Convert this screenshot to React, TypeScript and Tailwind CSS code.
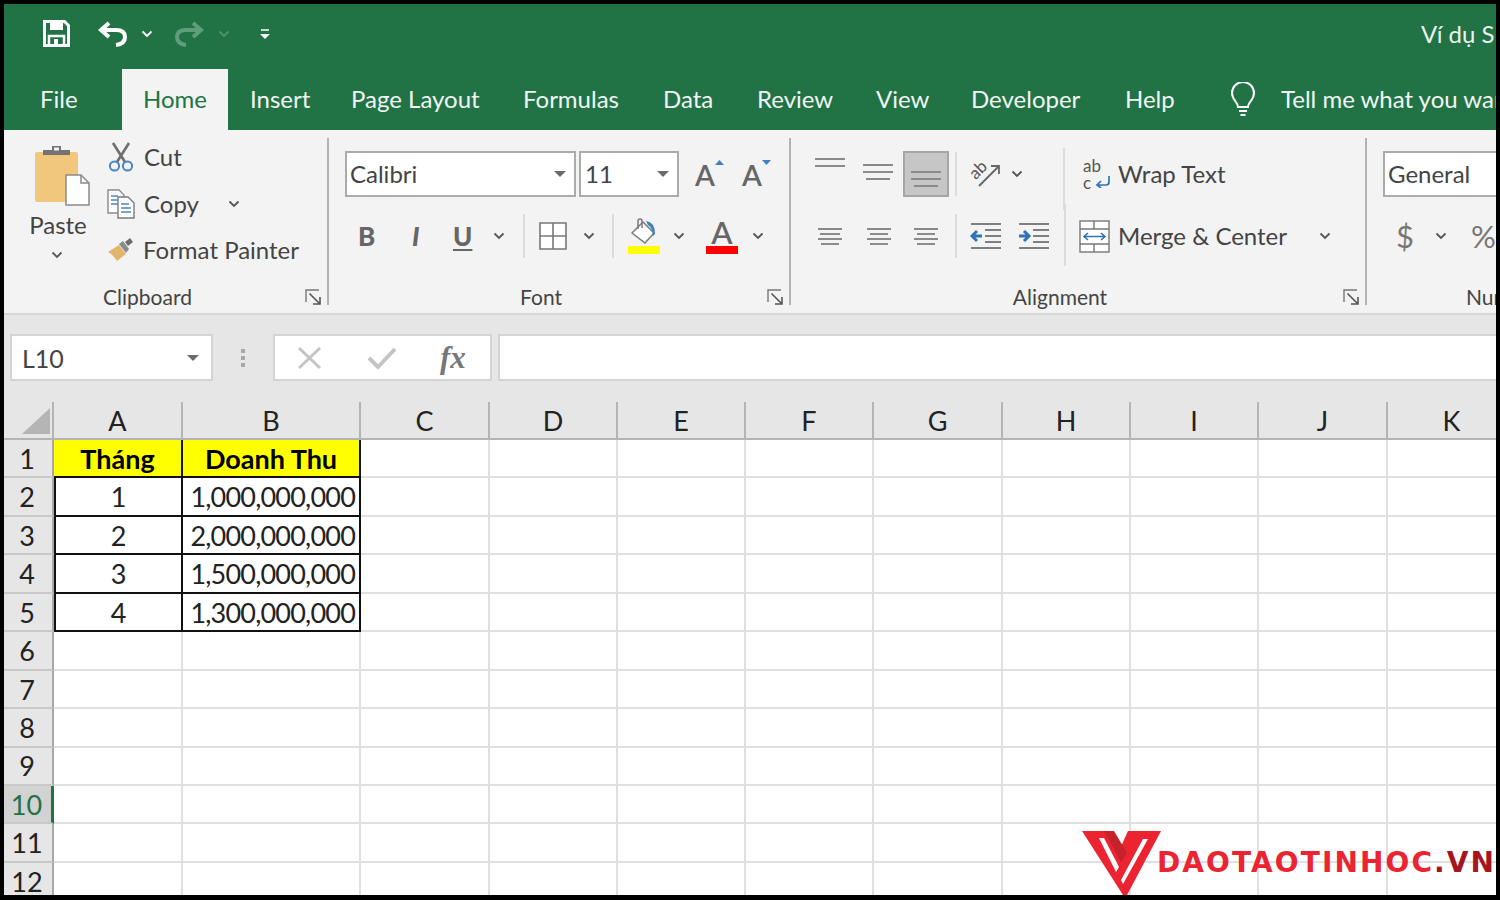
import type { ReactNode } from 'react';

const font = "font-['Lato','Open_Sans',sans-serif]";

const tabs = [
  { label: 'Insert', w: 58 },
  { label: 'Page Layout', w: 129 },
  { label: 'Formulas', w: 97 },
  { label: 'Data', w: 51 },
  { label: 'Review', w: 76 },
  { label: 'View', w: 52 },
  { label: 'Developer', w: 111 },
  { label: 'Help', w: 51 },
];

const columns = ['A', 'B', 'C', 'D', 'E', 'F', 'G', 'H', 'I', 'J', 'K'];

const table: Record<number, string[]> = {
  2: ['1', '1,000,000,000'],
  3: ['2', '2,000,000,000'],
  4: ['3', '1,500,000,000'],
  5: ['4', '1,300,000,000'],
};

function Chevron({ color = '#555', className = '' }: { color?: string; className?: string }) {
  return (
    <svg width="12" height="8" viewBox="0 0 12 8" className={`shrink-0 ${className}`}>
      <path d="M1.5 1.5 6 6l4.5-4.5" fill="none" stroke={color} strokeWidth="1.8" />
    </svg>
  );
}

function Caret() {
  return (
    <svg width="12" height="6" viewBox="0 0 12 6">
      <path d="M0 0h12L6 6z" fill="#6a6a6a" />
    </svg>
  );
}

function Launcher() {
  return (
    <svg width="17" height="17" viewBox="0 0 17 17" className="absolute right-[7px] bottom-[7px]">
      <path d="M1 13V1h13" fill="none" stroke="#777" strokeWidth="1.4" />
      <path d="M4.5 4.5 14 14M8 15h7V8" fill="none" stroke="#555" strokeWidth="1.6" />
    </svg>
  );
}

function Sep({ className = '' }: { className?: string }) {
  return <div className={`w-[2px] h-[44px] bg-[#dcdcdc] shrink-0 ${className}`} />;
}

function Lines({ widths, gap = 7 }: { widths: number[]; gap?: number }) {
  return (
    <div className="flex flex-col items-center" style={{ gap }}>
      {widths.map((w, i) => (
        <div key={i} className="h-[2px] bg-[#8a8a8a]" style={{ width: w }} />
      ))}
    </div>
  );
}

function Group({ w, label, children }: { w: number; label: string; children: ReactNode }) {
  return (
    <div className="relative flex flex-col shrink-0 h-full" style={{ width: w }}>
      <div className="flex-1 min-h-0">{children}</div>
      <div className="h-[29px] pr-[38px] text-center text-[21px] leading-[26px] text-[#444] whitespace-nowrap">{label}</div>
      <Launcher />
      <div className="absolute right-0 top-[8px] bottom-[8px] w-[2px] bg-[#b3b3b3]" />
    </div>
  );
}

function PasteIcon() {
  return (
    <svg width="56" height="62" viewBox="0 0 56 62">
      <rect x="1" y="8" width="43" height="50" rx="2" fill="#f0c77c" />
      <path d="M9 11V6h9V2h9v4h9v5z" fill="#737373" />
      <rect x="20" y="3.5" width="5" height="3" fill="#f3f3f3" />
      <path d="M32 31h15l8 8v22H32z" fill="#fff" stroke="#8a8a8a" strokeWidth="1.5" />
      <path d="M47 31v8h8" fill="none" stroke="#8a8a8a" strokeWidth="1.5" />
    </svg>
  );
}

function ScissorsIcon() {
  return (
    <svg width="28" height="30" viewBox="0 0 28 30">
      <path d="M6 1 18 20M22 1 10 20" fill="none" stroke="#6f6f6f" strokeWidth="2.6" />
      <circle cx="7.5" cy="24" r="4.6" fill="none" stroke="#4a86c5" strokeWidth="2" />
      <circle cx="20.5" cy="24" r="4.6" fill="none" stroke="#4a86c5" strokeWidth="2" />
    </svg>
  );
}

function CopyIcon() {
  return (
    <svg width="28" height="30" viewBox="0 0 28 30">
      <path d="M1 1h11l5 5v18H1z" fill="#fff" stroke="#8a8a8a" strokeWidth="1.4" />
      <path d="M4 7h7M4 11h9M4 15h9" stroke="#4a86c5" strokeWidth="1.4" />
      <path d="M11 8h10l6 6v15H11z" fill="#fff" stroke="#7a7a7a" strokeWidth="1.4" />
      <path d="M14 15h8M14 19h10M14 23h10" stroke="#4a86c5" strokeWidth="1.4" />
    </svg>
  );
}

function BrushIcon() {
  return (
    <svg width="28" height="26" viewBox="0 0 28 26">
      <path d="M1 15 12 8l7 9-9 7C8 21 5 17 1 15z" fill="#e3b56c" />
      <path d="m12 7 4-3 6 8-3 4z" fill="#8a8a8a" />
      <path d="m18 5 5-4 3 4-5 4z" fill="#6d6d6d" />
    </svg>
  );
}

function FillIcon() {
  return (
    <div className="flex flex-col items-center w-[32px]">
      <svg width="30" height="28" viewBox="0 0 30 28">
        <path d="m3 15 11-11 11 11-9 10z" fill="#fff" stroke="#7a7a7a" strokeWidth="1.5" />
        <path d="M9 11V3q0-2 2-2t2 2v7" fill="none" stroke="#7a7a7a" strokeWidth="1.5" />
        <path d="M17 3q9 1 9 13l-2 2q0-8-5-11z" fill="#3f80bf" />
      </svg>
      <div className="w-[32px] h-[8px] bg-[#ffff00]" />
    </div>
  );
}

function RotateIcon() {
  return (
    <svg width="32" height="32" viewBox="0 0 32 32">
      <text x="1" y="16" fontSize="17" fill="#555" transform="rotate(-45 12 14)" fontFamily="Lato, sans-serif">ab</text>
      <path d="M9 29 28 10M21 9h8v8" fill="none" stroke="#666" strokeWidth="1.8" />
    </svg>
  );
}

function IndentIcon({ flip = false }: { flip?: boolean }) {
  return (
    <svg width="32" height="28" viewBox="0 0 32 28">
      <path d="M1 2h30M15 8h16M15 14h16M15 20h16M1 26h30" stroke="#7f7f7f" strokeWidth="2" />
      {flip ? (
        <path d="M1 14h9M6 9l5 5-5 5" fill="none" stroke="#2f75b5" strokeWidth="3" />
      ) : (
        <path d="M12 14H3M7 9l-5 5 5 5" fill="none" stroke="#2f75b5" strokeWidth="3" />
      )}
    </svg>
  );
}

function WrapIcon() {
  return (
    <div className="relative w-[28px] h-[34px] shrink-0 text-[#555] text-[17px] leading-[17px] font-['Lato',sans-serif]">
      <div>ab</div>
      <div>c</div>
      <svg width="16" height="12" viewBox="0 0 16 12" className="absolute right-0 bottom-[3px]">
        <path d="M14 0v6q0 3-3 3H2M6 5 2 9l4 3" fill="none" stroke="#2f75b5" strokeWidth="1.7" />
      </svg>
    </div>
  );
}

function MergeIcon() {
  return (
    <svg width="31" height="33" viewBox="0 0 31 33">
      <rect x="1" y="1" width="29" height="31" fill="#fff" stroke="#777" strokeWidth="1.4" />
      <path d="M1 9h29M1 24h29M15 1v8M15 24v8" stroke="#777" strokeWidth="1.4" />
      <path d="M5 16.500h21M9 13l-4 3.500 4 3.500M22 13l4 3.500-4 3.500" fill="none" stroke="#2f75b5" strokeWidth="1.6" />
    </svg>
  );
}

function Logo() {
  return (
    <div className="absolute left-[1078px] top-[826px] flex items-start">
      <svg width="80" height="66" viewBox="0 0 80 66" className="shrink-0">
        <path d="M0 1h27l10 20L46 1h33L45 65h-4z" fill="#ec2330" />
        <path d="M22 1h10l13 22-6 9z" fill="#c6222c" />
        <path d="M17 8h5l15 29-3 5z" fill="#fff" />
        <path d="M61 9h5L41 54l-2-4z" fill="#fff" />
      </svg>
      <div className="ml-[-5px] mt-[16px] w-[338px] overflow-hidden text-[28px] leading-[34px] font-bold tracking-[2.1px] whitespace-nowrap text-[#ec2330] font-['DejaVu_Sans',sans-serif]">
        DAOTAOTINHOC<span className="text-[#a5161f]">.VN</span>
      </div>
    </div>
  );
}

export default function App() {
  return (
    <div className={`w-[1500px] h-[900px] bg-black pt-[4px] pl-[4px] pr-[4px] pb-[5px] ${font}`}>
      <div className="relative w-full h-full overflow-hidden bg-white flex flex-col">
        {/* Title bar */}
        <div className="h-[65px] bg-[#217346] flex items-center shrink-0 pl-[39px] pb-[6px] text-white">
          <svg width="27" height="27" viewBox="0 0 27 27" className="shrink-0">
            <path d="M1.500 1.500h20l4 4v20h-24z" fill="none" stroke="#fff" strokeWidth="3" />
            <rect x="7" y="3" width="13" height="7" fill="#fff" />
            <path d="M6 25v-9h15v9" fill="none" stroke="#fff" strokeWidth="2.500" />
            <rect x="11" y="19" width="4" height="6" fill="#fff" />
          </svg>
          <svg width="30" height="26" viewBox="0 0 30 26" className="ml-[28px] shrink-0">
            <path d="M11 2 3 9l8 7M3 9h15q9 0 9 7t-9 8" fill="none" stroke="#fff" strokeWidth="4" />
          </svg>
          <Chevron color="#fff" className="ml-[13px]" />
          <svg width="30" height="26" viewBox="0 0 30 26" className="ml-[21px] shrink-0">
            <path d="M19 2l8 7-8 7M27 9H12q-9 0-9 7t9 8" fill="none" stroke="#5f9d7c" strokeWidth="4" />
          </svg>
          <Chevron color="#4f9070" className="ml-[14px]" />
          <svg width="10" height="11" viewBox="0 0 10 11" className="ml-[30px] mt-[2px] shrink-0">
            <path d="M1 1h8" stroke="#fff" strokeWidth="1.500" />
            <path d="M0 5h10L5 10z" fill="#fff" />
          </svg>
          <div className="ml-auto text-[24px] text-[#e9f2ec] whitespace-nowrap w-[75px] overflow-hidden">Ví dụ SUM</div>
        </div>

        {/* Tabs */}
        <div className="h-[61px] bg-[#217346] flex shrink-0 overflow-hidden text-[24px] leading-[60px] text-[#f1f6f3] whitespace-nowrap pl-[36px]">
          <div className="w-[37px] shrink-0">File</div>
          <div className="ml-[45px] w-[106px] shrink-0 bg-[#f3f3f3] text-center text-[#217346]">Home</div>
          <div className="flex gap-[43px] ml-[22px] shrink-0">
            {tabs.map((t) => (
              <div key={t.label} className="shrink-0" style={{ width: t.w }}>{t.label}</div>
            ))}
          </div>
          <div className="ml-[54px] flex items-center shrink-0">
            <svg width="26" height="36" viewBox="0 0 26 36" className="mt-[1px] shrink-0">
              <path d="M8 25c0-5-6-7-6-14a11 11 0 0 1 22 0c0 7-6 9-6 14z" fill="none" stroke="#fff" strokeWidth="2" />
              <path d="M9 29h8M10.500 33h5" stroke="#fff" strokeWidth="2" />
            </svg>
            <div className="ml-[25px] mt-[-2px] w-[216px] overflow-hidden">Tell me what you want to do</div>
          </div>
        </div>

        {/* Ribbon */}
        <div className="h-[185px] bg-[#f3f3f3] border-b-2 border-[#d6d6d6] flex shrink-0 text-[24px] text-[#444]">
          <Group w={325} label="Clipboard">
            <div className="flex">
              <div className="w-[103px] flex flex-col items-center pt-[14px] pl-[4px]">
                <div className="pl-[8px]"><PasteIcon /></div>
                <div className="mt-[4px] leading-[30px] pl-[1px]">Paste</div>
                <Chevron className="mt-[11px] mr-[2px]" />
              </div>
              <div className="flex flex-col pt-[12px] whitespace-nowrap leading-[30px] gap-[16.500px]">
                <div className="flex items-center gap-[9px]"><ScissorsIcon /><span>Cut</span></div>
                <div className="flex items-center gap-[9px]"><CopyIcon /><span>Copy</span><Chevron className="ml-[20px]" /></div>
                <div className="flex items-center gap-[8px]"><BrushIcon /><span>Format Painter</span></div>
              </div>
            </div>
          </Group>

          <Group w={462} label="Font">
            <div className="pl-[16px] pt-[21px]">
              <div className="flex items-center h-[46px]">
                <div className="w-[231px] h-[46px] bg-white border-2 border-[#ababab] flex items-center justify-between pl-[3px] pr-[8px]">
                  <span>Calibri</span><Caret />
                </div>
                <div className="w-[100px] h-[46px] ml-[3px] bg-white border-2 border-[#ababab] flex items-center justify-between pl-[4px] pr-[8px]">
                  <span>11</span><Caret />
                </div>
                <div className="relative w-[26px] ml-[16px] text-[29px] leading-[46px] font-semibold text-[#666] pt-[2px]">
                  A
                  <svg width="9" height="5" viewBox="0 0 9 5" className="absolute right-[-3px] top-[10px]"><path d="M0 5h9L4.500 0z" fill="#3f80bf" /></svg>
                </div>
                <div className="relative w-[26px] ml-[21px] text-[29px] leading-[46px] font-semibold text-[#666] pt-[2px]">
                  A
                  <svg width="9" height="5" viewBox="0 0 9 5" className="absolute right-[-3px] top-[10px]"><path d="M0 0h9L4.500 5z" fill="#3f80bf" /></svg>
                </div>
              </div>
              <div className="flex items-center h-[46px] mt-[16px]">
                <span className="w-[16px] ml-[13px] text-[26px] font-black text-[#666]">B</span>
                <span className="w-[14px] ml-[38px] text-[26px] font-black italic text-[#666]">I</span>
                <span className="w-[18px] ml-[27px] text-[26px] leading-[30px] font-black text-[#666] underline underline-offset-[3px]">U</span>
                <Chevron className="ml-[22px]" />
                <Sep className="ml-[18px]" />
                <svg width="28" height="28" viewBox="0 0 28 28" className="ml-[14px] shrink-0">
                  <path d="M1 1h26v26H1zM14 1v26M1 14h26" fill="#fff" stroke="#777" strokeWidth="1.600" />
                </svg>
                <Chevron className="ml-[16px]" />
                <Sep className="ml-[17px]" />
                <div className="ml-[14px]"><FillIcon /></div>
                <Chevron className="ml-[13px]" />
                <div className="ml-[21px] w-[32px] flex flex-col items-center">
                  <span className="text-[31px] leading-[28px] font-semibold text-[#666]">A</span>
                  <div className="w-[32px] h-[8px] bg-[#ff0000]" />
                </div>
                <Chevron className="ml-[14px]" />
              </div>
            </div>
          </Group>

          <Group w={576} label="Alignment">
            <div className="pl-[23px] pt-[21px]">
              <div className="flex items-start h-[46px]">
                <div className="w-[32px] pt-[7px]"><Lines widths={[30, 30]} gap={5} /></div>
                <div className="w-[32px] ml-[16px] pt-[13px]"><Lines widths={[30, 30, 24]} gap={5} /></div>
                <div className="w-[46px] h-[46px] ml-[9px] bg-[#c6c6c6] border-2 border-[#a6a6a6] pt-[18px]"><Lines widths={[30, 30, 24]} gap={5} /></div>
                <Sep className="ml-[6px] h-[40px] mt-[1px]" />
                <div className="ml-[13px] pt-[6px]"><RotateIcon /></div>
                <Chevron className="ml-[9px] mt-[19px]" />
                <Sep className="ml-[40px] mt-[-3px] h-[62px]" />
                <div className="ml-[18px] pt-[6px]"><WrapIcon /></div>
                <div className="ml-[7px] leading-[46px] whitespace-nowrap">Wrap Text</div>
              </div>
              <div className="flex items-center h-[46px] mt-[16px] ml-[4px]">
                <div className="w-[24px]"><Lines widths={[24, 20, 24, 18]} gap={3} /></div>
                <div className="w-[26px] ml-[24px]"><Lines widths={[24, 18, 24, 18]} gap={3} /></div>
                <div className="w-[24px] ml-[22px] flex justify-end"><Lines widths={[24, 18, 24, 18]} gap={3} /></div>
                <Sep className="ml-[17px]" />
                <div className="ml-[13px]"><IndentIcon /></div>
                <div className="ml-[16px]"><IndentIcon flip /></div>
                <Sep className="ml-[14px] mt-[-2px] h-[62px]" />
                <div className="ml-[13px]"><MergeIcon /></div>
                <div className="ml-[8px] whitespace-nowrap">Merge &amp; Center</div>
                <Chevron className="ml-[32px]" />
              </div>
            </div>
          </Group>

          <div className="relative flex-1 min-w-0 overflow-hidden pl-[16px] pt-[21px] whitespace-nowrap">
            <div className="w-[200px] h-[46px] bg-white border-2 border-[#ababab] pl-[3px] leading-[42px]">General</div>
            <div className="flex items-center h-[46px] mt-[16px] text-[#777]">
              <span className="ml-[13px] text-[31px]">$</span>
              <Chevron className="ml-[21px]" />
              <span className="ml-[24px] text-[31px]">%</span>
            </div>
            <div className="absolute left-[99px] bottom-[3px] text-[21px] leading-[26px]">Number</div>
          </div>
        </div>

        {/* Formula bar */}
        <div className="h-[87px] bg-[#e6e6e6] shrink-0 flex items-start pt-[19px] pl-[6px]">
          <div className="w-[203px] h-[47px] bg-white border-2 border-[#d4d4d4] flex items-center justify-between pl-[10px] pr-[12px] text-[25px] text-[#444]">
            <span className="pt-[2px]">L10</span><Caret />
          </div>
          <div className="w-[60px] h-[47px] flex flex-col items-center justify-center gap-[3px]">
            <div className="w-[4px] h-[4px] bg-[#a8a8a8]" />
            <div className="w-[4px] h-[4px] bg-[#a8a8a8]" />
            <div className="w-[4px] h-[4px] bg-[#a8a8a8]" />
          </div>
          <div className="w-[219px] h-[47px] bg-white border-2 border-[#d4d4d4] flex items-center pl-[22px]">
            <svg width="26" height="24" viewBox="0 0 26 24" className="shrink-0">
              <path d="M2 2l21 20M23 2 2 22" stroke="#c4c4c4" strokeWidth="3" />
            </svg>
            <svg width="30" height="24" viewBox="0 0 30 24" className="ml-[44px] shrink-0">
              <path d="M2 12l9 9L28 3" fill="none" stroke="#c4c4c4" strokeWidth="4" />
            </svg>
            <span className="ml-[43px] text-[31px] leading-[30px] font-bold italic text-[#777] font-['Liberation_Serif',serif]">fx</span>
          </div>
          <div className="flex-1 h-[47px] ml-[6px] bg-white border-2 border-r-0 border-[#d4d4d4]" />
        </div>

        {/* Sheet */}
        <div className="flex-1 min-h-0 overflow-hidden grid grid-cols-[50px_129px_178px_129px_128px_128px_128px_129px_128px_128px_129px_129px] grid-rows-[38px] auto-rows-[38.450px] text-[27px] text-[#222]">
          <div className="bg-[#e6e6e6] border-r-2 border-b-2 border-[#b4b4b4] relative">
            <svg width="28" height="26" viewBox="0 0 28 26" className="absolute left-[18px] top-[6px]">
              <path d="M28 0v26H0z" fill="#b5b5b5" />
            </svg>
          </div>
          {columns.map((c) => (
            <div key={c} className="bg-[#e6e6e6] border-r-2 border-b-2 border-[#b4b4b4] flex items-center justify-center leading-none">{c}</div>
          ))}
          {Array.from({ length: 12 }, (_, i) => i + 1).map((row) => (
            <div key={row} className="contents">
              <div className={`flex items-center justify-center pr-[2px] pt-[2px] border-b-2 border-r-2 ${row === 10 ? 'bg-[#d2d2d2] text-[#217346] border-r-[3px] border-r-[#217346] border-b-[#c8c8c8]' : 'bg-[#e6e6e6] border-r-[#a8a8a8] border-b-[#c8c8c8]'}`}>{row}</div>
              {columns.map((c, ci) => {
                if (row === 1 && ci < 2) {
                  return (
                    <div key={c} className="bg-[#ffff00] border-r-2 border-b-2 border-[#111] flex items-center justify-center pt-[2px] font-bold text-[27px] text-black">
                      {ci === 0 ? 'Tháng' : 'Doanh Thu'}
                    </div>
                  );
                }
                if (table[row] && ci < 2) {
                  return (
                    <div key={c} className={`border-r-2 border-b-2 border-[#111] flex items-center pt-[2px] ${ci === 0 ? 'justify-center border-l-2' : 'justify-end pr-[4px] tracking-[-0.8px]'}`}>
                      {table[row][ci]}
                    </div>
                  );
                }
                return <div key={c} className="border-r-2 border-b-2 border-[#e0e0e0]" />;
              })}
            </div>
          ))}
        </div>

        <Logo />
      </div>
    </div>
  );
}
